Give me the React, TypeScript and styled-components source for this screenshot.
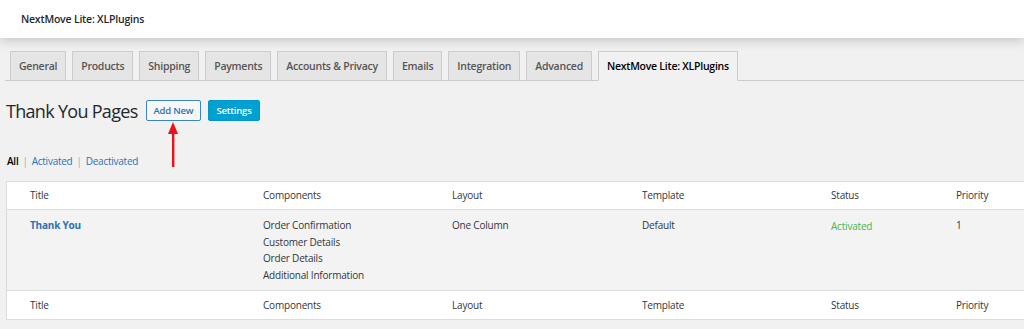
import React from "react";
import styled, { createGlobalStyle } from "styled-components";

const GlobalStyle = createGlobalStyle`
  body {
    margin: 0;
    background: #f1f1f1;
    font-family: "Open Sans", "Noto Sans", sans-serif;
    color: #444;
  }
`;

const TopBar = styled.div`
  height: 38px;
  background: #fff;
  display: flex;
  align-items: center;
  padding-left: 21px;
  font-size: 10.5px;
  letter-spacing: -0.2px;
  font-weight: 600;
  color: #23282d;
  box-shadow: 0 3px 10px rgba(0, 0, 0, 0.18);
  position: relative;
`;

const Content = styled.div`
  padding: 13px 0 0 6px;
`;

const TabNav = styled.div`
  display: flex;
  gap: 6px;
  padding-left: 5px;
  margin-left: -1px;
  border-bottom: 1px solid #ccc;
  height: 29px;
`;

const Tab = styled.div<{ $active?: boolean }>`
  height: 28px;
  padding: 0 8px;
  display: flex;
  align-items: center;
  font-size: 10.5px;
  letter-spacing: -0.25px;
  font-weight: 600;
  border: 1px solid #ccc;
  border-bottom: ${(p) => (p.$active ? "1px solid #f1f1f1" : "none")};
  background: ${(p) => (p.$active ? "#f1f1f1" : "#e5e5e5")};
  color: ${(p) => (p.$active ? "#000" : "#555")};
  white-space: nowrap;
`;

const Heading = styled.div`
  display: flex;
  align-items: center;
  gap: 7px;
  margin-top: 19px;
  height: 21px;
`;

const Title = styled.h1`
  margin: 0 1px 0 0;
  font-size: 18px;
  letter-spacing: -0.7px;
  font-weight: 400;
  color: #23282d;
`;

const ButtonWrap = styled.div`
  position: relative;
`;

const Button = styled.div<{ $primary?: boolean }>`
  height: 21px;
  box-sizing: border-box;
  padding: 0 7px;
  display: flex;
  align-items: center;
  font-size: 9.5px;
  letter-spacing: -0.2px;
  font-weight: 600;
  border-radius: 2px;
  border: 1px solid ${(p) => (p.$primary ? "#0096c7" : "#3a86c4")};
  background: ${(p) => (p.$primary ? "#00a0d2" : "#f7f7f7")};
  color: ${(p) => (p.$primary ? "#fff" : "#2c72b0")};
`;

const Arrow = styled.svg`
  position: absolute;
  top: 100%;
  left: 50%;
  margin-left: -6px;
`;

const Filters = styled.div`
  margin-top: 33px;
  font-size: 10px;
  letter-spacing: -0.25px;
  color: #aaa;
  display: flex;
  gap: 4px;
  padding-left: 1px;
`;

const FilterLink = styled.span<{ $current?: boolean }>`
  color: ${(p) => (p.$current ? "#000" : "#2c72b0")};
  font-weight: ${(p) => (p.$current ? 600 : 400)};
`;

const Table = styled.div`
  margin-top: 13px;
  border: 1px solid #dcdcdc;
  border-right: none;
  background: #fff;
  font-size: 10px;
  letter-spacing: -0.2px;
  color: #32373c;
`;

const Row = styled.div<{ $head?: boolean; $body?: boolean }>`
  display: grid;
  grid-template-columns: 233px 189px 190px 189px 125px 1fr;
  padding-left: 23px;
  align-items: ${(p) => (p.$body ? "start" : "center")};
  height: ${(p) => (p.$body ? "81px" : p.$head ? "27px" : "29px")};
  box-sizing: border-box;
  padding-top: ${(p) => (p.$body ? "7px" : "0")};
  background: ${(p) => (p.$body ? "#f3f3f3" : "#fff")};
  border-top: ${(p) => (p.$head ? "none" : "1px solid #dcdcdc")};
`;

const Cell = styled.div`
  line-height: 16.6px;
`;

const RowTitle = styled(Cell)`
  color: #2c72b0;
  font-weight: 700;
`;

const Status = styled(Cell)`
  color: #46b450;
  padding-top: 1px;
`;

const columns = ["Title", "Components", "Layout", "Template", "Status", "Priority"];
const tabs = [
  "General",
  "Products",
  "Shipping",
  "Payments",
  "Accounts & Privacy",
  "Emails",
  "Integration",
  "Advanced",
];

const HeadRow = ({ top }: { top?: boolean }) => (
  <Row $head={top}>
    {columns.map((c) => (
      <Cell key={c}>{c}</Cell>
    ))}
  </Row>
);

export default function App() {
  return (
    <>
      <GlobalStyle />
      <TopBar>NextMove Lite: XLPlugins</TopBar>
      <Content>
        <TabNav>
          {tabs.map((t) => (
            <Tab key={t}>{t}</Tab>
          ))}
          <Tab $active>NextMove Lite: XLPlugins</Tab>
        </TabNav>
        <Heading>
          <Title>Thank You Pages</Title>
          <ButtonWrap>
            <Button>Add New</Button>
            <Arrow width="12" height="47" viewBox="0 0 12 47">
              <polygon points="6,1 11,13 1,13" fill="#e8131a" />
              <rect x="5" y="11" width="2.4" height="35" fill="#e8131a" />
            </Arrow>
          </ButtonWrap>
          <Button $primary>Settings</Button>
        </Heading>
        <Filters>
          <FilterLink $current>All</FilterLink>|
          <FilterLink>Activated</FilterLink>|
          <FilterLink>Deactivated</FilterLink>
        </Filters>
        <Table>
          <HeadRow top />
          <Row $body>
            <RowTitle>Thank You</RowTitle>
            <div>
              <Cell>Order Confirmation</Cell>
              <Cell>Customer Details</Cell>
              <Cell>Order Details</Cell>
              <Cell>Additional Information</Cell>
            </div>
            <Cell>One Column</Cell>
            <Cell>Default</Cell>
            <Status>Activated</Status>
            <Cell>1</Cell>
          </Row>
          <HeadRow />
        </Table>
      </Content>
    </>
  );
}
